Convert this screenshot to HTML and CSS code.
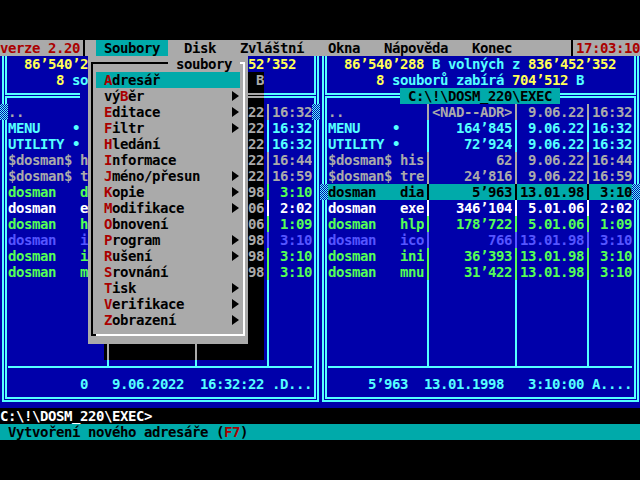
FILE: index.html
```html
<!DOCTYPE html>
<html lang="cs">
<head>
<meta charset="utf-8">
<title>DOS Manager 2.20</title>
<link rel="stylesheet" href="styles.css">
</head>
<body>
<div class="screen">
  <div class="row menubar"><span class="w10 red">verze 2.20</span><i class="w1 sv"></i><span class="w1"> </span><span class="w9 msel"> Soubory </span><span class="w50">  Disk   Zvláštní   Okna   Nápověda   Konec       </span><i class="w1 sv"></i><span class="w8 red">17:03:10</span></div>

  <div class="panels">
    <div class="panel">
      <div class="row"><i class="w1 dv"></i><span class="w10">  <span class="y">86’540’2</span></span><i class="w20"></i><span class="w8"><span class="y">52’352</span>  </span><i class="w1 dv"></i></div>
      <div class="row"><i class="w1 dv"></i><span class="w10">      <span class="y">8</span> so</span><i class="w20"></i><span class="w2 shd"> B</span><span class="w6">      </span><i class="w1 dv"></i></div>
      <div class="row"><i class="w1 dlt"></i><i class="w9 dh"></i><i class="w21"></i><i class="w2 dh shd"></i><i class="w6 dh"></i><i class="w1 drt"></i></div>
      <div class="row gr"><i class="w1 stip"></i><span class="w10">..</span><i class="w20"></i><span class="w2 shd">22</span><i class="w1 sv"></i><span class="w5">16:32</span><i class="w1 stip"></i></div>
      <div class="row cy"><i class="w1 dv"></i><span class="w10">MENU    •</span><i class="w20"></i><span class="w2 shd">22</span><i class="w1 sv"></i><span class="w5">16:32</span><i class="w1 dv"></i></div>
      <div class="row cy"><i class="w1 dv"></i><span class="w10">UTILITY •</span><i class="w20"></i><span class="w2 shd">22</span><i class="w1 sv"></i><span class="w5">16:32</span><i class="w1 dv"></i></div>
      <div class="row gr"><i class="w1 dv"></i><span class="w10">$dosman$ h</span><i class="w20"></i><span class="w2 shd">22</span><i class="w1 sv"></i><span class="w5">16:44</span><i class="w1 dv"></i></div>
      <div class="row gr"><i class="w1 dv"></i><span class="w10">$dosman$ t</span><i class="w20"></i><span class="w2 shd">22</span><i class="w1 sv"></i><span class="w5">16:59</span><i class="w1 dv"></i></div>
      <div class="row gn"><i class="w1 dv"></i><span class="w10">dosman   d</span><i class="w20"></i><span class="w2 shd">98</span><i class="w1 sv"></i><span class="w5"> 3:10</span><i class="w1 dv"></i></div>
      <div class="row wh"><i class="w1 dv"></i><span class="w10">dosman   e</span><i class="w20"></i><span class="w2 shd">06</span><i class="w1 sv"></i><span class="w5"> 2:02</span><i class="w1 dv"></i></div>
      <div class="row gn"><i class="w1 dv"></i><span class="w10">dosman   h</span><i class="w20"></i><span class="w2 shd">06</span><i class="w1 sv"></i><span class="w5"> 1:09</span><i class="w1 dv"></i></div>
      <div class="row lb"><i class="w1 dv"></i><span class="w10">dosman   i</span><i class="w20"></i><span class="w2 shd">98</span><i class="w1 sv"></i><span class="w5"> 3:10</span><i class="w1 dv"></i></div>
      <div class="row gn"><i class="w1 dv"></i><span class="w10">dosman   i</span><i class="w20"></i><span class="w2 shd">98</span><i class="w1 sv"></i><span class="w5"> 3:10</span><i class="w1 dv"></i></div>
      <div class="row gn"><i class="w1 dv"></i><span class="w10">dosman   m</span><i class="w20"></i><span class="w2 shd">98</span><i class="w1 sv"></i><span class="w5"> 3:10</span><i class="w1 dv"></i></div>
      <div class="row"><i class="w1 dv"></i><i class="w10"></i><i class="w20"></i><i class="w2 shd"></i><i class="w1 sv"></i><i class="w5"></i><i class="w1 dv"></i></div>
      <div class="row"><i class="w1 dv"></i><i class="w10"></i><i class="w20"></i><i class="w2 shd"></i><i class="w1 sv"></i><i class="w5"></i><i class="w1 dv"></i></div>
      <div class="row"><i class="w1 dv"></i><i class="w10"></i><i class="w20"></i><i class="w2 shd"></i><i class="w1 sv"></i><i class="w5"></i><i class="w1 dv"></i></div>
      <div class="row"><i class="w1 dv"></i><i class="w10"></i><i class="w20"></i><i class="w2 shd"></i><i class="w1 sv"></i><i class="w5"></i><i class="w1 dv"></i></div>
      <div class="row"><i class="w1 dv"></i><i class="w12"></i><i class="w1 sv shd"></i><i class="w10 shd"></i><i class="w1 sv shd"></i><i class="w8 shd"></i><i class="w1 sv"></i><i class="w5"></i><i class="w1 dv"></i></div>
      <div class="row"><i class="w1 dv"></i><i class="w12 sh"></i><i class="w1 sbt"></i><i class="w10 sh"></i><i class="w1 sbt"></i><i class="w8 sh"></i><i class="w1 sbt"></i><i class="w5 sh"></i><i class="w1 dv"></i></div>
      <div class="row"><i class="w1 dv"></i><span class="w38">         0   9.06.2022  16:32:22 .D...</span><i class="w1 dv"></i></div>
      <div class="row"><i class="w1 dbl"></i><i class="w38 dh"></i><i class="w1 dbr"></i></div>
    </div>

    <div class="panel">
      <div class="row"><i class="w1 dv"></i><span class="w38">  <span class="y">86’540’288</span> B volných z <span class="y">836’452’352</span>  </span><i class="w1 dv"></i></div>
      <div class="row"><i class="w1 dv"></i><span class="w38">      <span class="y">8</span> souborů zabírá <span class="y">704’512</span> B      </span><i class="w1 dv"></i></div>
      <div class="row"><i class="w1 dlt"></i><i class="w9 dh"></i><span class="w20 lblon"> C:\!\DOSM_220\EXEC </span><i class="w9 dh"></i><i class="w1 drt"></i></div>
      <div class="row gr"><i class="w1 dv"></i><span class="w12">..          </span><i class="w1 sv"></i><span class="w10">&lt;NAD--ADR&gt;</span><i class="w1 sv"></i><span class="w8"> 9.06.22</span><i class="w1 sv"></i><span class="w5">16:32</span><i class="w1 dv"></i></div>
      <div class="row cy"><i class="w1 dv"></i><span class="w12">MENU    •   </span><i class="w1 sv"></i><span class="w10">   164’845</span><i class="w1 sv"></i><span class="w8"> 9.06.22</span><i class="w1 sv"></i><span class="w5">16:32</span><i class="w1 dv"></i></div>
      <div class="row cy"><i class="w1 dv"></i><span class="w12">UTILITY •   </span><i class="w1 sv"></i><span class="w10">    72’924</span><i class="w1 sv"></i><span class="w8"> 9.06.22</span><i class="w1 sv"></i><span class="w5">16:32</span><i class="w1 dv"></i></div>
      <div class="row gr"><i class="w1 dv"></i><span class="w12">$dosman$ his</span><i class="w1 sv"></i><span class="w10">        62</span><i class="w1 sv"></i><span class="w8"> 9.06.22</span><i class="w1 sv"></i><span class="w5">16:44</span><i class="w1 dv"></i></div>
      <div class="row gr"><i class="w1 dv"></i><span class="w12">$dosman$ tre</span><i class="w1 sv"></i><span class="w10">    24’816</span><i class="w1 sv"></i><span class="w8"> 9.06.22</span><i class="w1 sv"></i><span class="w5">16:59</span><i class="w1 dv"></i></div>
      <div class="row hl"><i class="w1 stip"></i><span class="w12">dosman   dia</span><i class="w1 sv"></i><span class="w10">     5’963</span><i class="w1 sv"></i><span class="w8">13.01.98</span><i class="w1 sv"></i><span class="w5"> 3:10</span><i class="w1 stip"></i></div>
      <div class="row wh"><i class="w1 dv"></i><span class="w12">dosman   exe</span><i class="w1 sv"></i><span class="w10">   346’104</span><i class="w1 sv"></i><span class="w8"> 5.01.06</span><i class="w1 sv"></i><span class="w5"> 2:02</span><i class="w1 dv"></i></div>
      <div class="row gn"><i class="w1 dv"></i><span class="w12">dosman   hlp</span><i class="w1 sv"></i><span class="w10">   178’722</span><i class="w1 sv"></i><span class="w8"> 5.01.06</span><i class="w1 sv"></i><span class="w5"> 1:09</span><i class="w1 dv"></i></div>
      <div class="row lb"><i class="w1 dv"></i><span class="w12">dosman   ico</span><i class="w1 sv"></i><span class="w10">       766</span><i class="w1 sv"></i><span class="w8">13.01.98</span><i class="w1 sv"></i><span class="w5"> 3:10</span><i class="w1 dv"></i></div>
      <div class="row gn"><i class="w1 dv"></i><span class="w12">dosman   ini</span><i class="w1 sv"></i><span class="w10">    36’393</span><i class="w1 sv"></i><span class="w8">13.01.98</span><i class="w1 sv"></i><span class="w5"> 3:10</span><i class="w1 dv"></i></div>
      <div class="row gn"><i class="w1 dv"></i><span class="w12">dosman   mnu</span><i class="w1 sv"></i><span class="w10">    31’422</span><i class="w1 sv"></i><span class="w8">13.01.98</span><i class="w1 sv"></i><span class="w5"> 3:10</span><i class="w1 dv"></i></div>
      <div class="row"><i class="w1 dv"></i><i class="w12"></i><i class="w1 sv"></i><i class="w10"></i><i class="w1 sv"></i><i class="w8"></i><i class="w1 sv"></i><i class="w5"></i><i class="w1 dv"></i></div>
      <div class="row"><i class="w1 dv"></i><i class="w12"></i><i class="w1 sv"></i><i class="w10"></i><i class="w1 sv"></i><i class="w8"></i><i class="w1 sv"></i><i class="w5"></i><i class="w1 dv"></i></div>
      <div class="row"><i class="w1 dv"></i><i class="w12"></i><i class="w1 sv"></i><i class="w10"></i><i class="w1 sv"></i><i class="w8"></i><i class="w1 sv"></i><i class="w5"></i><i class="w1 dv"></i></div>
      <div class="row"><i class="w1 dv"></i><i class="w12"></i><i class="w1 sv"></i><i class="w10"></i><i class="w1 sv"></i><i class="w8"></i><i class="w1 sv"></i><i class="w5"></i><i class="w1 dv"></i></div>
      <div class="row"><i class="w1 dv"></i><i class="w12"></i><i class="w1 sv"></i><i class="w10"></i><i class="w1 sv"></i><i class="w8"></i><i class="w1 sv"></i><i class="w5"></i><i class="w1 dv"></i></div>
      <div class="row"><i class="w1 dv"></i><i class="w12 sh"></i><i class="w1 sbt"></i><i class="w10 sh"></i><i class="w1 sbt"></i><i class="w8 sh"></i><i class="w1 sbt"></i><i class="w5 sh"></i><i class="w1 dv"></i></div>
      <div class="row"><i class="w1 dv"></i><span class="w38">     5’963  13.01.1998   3:10:00 A....</span><i class="w1 dv"></i></div>
      <div class="row"><i class="w1 dbl"></i><i class="w38 dh"></i><i class="w1 dbr"></i></div>
    </div>
  </div>

  <div class="row prompt"><span class="w80">C:\!\DOSM_220\EXEC&gt;</span></div>
  <div class="row status"><span class="w80"> Vytvoření nového adresáře (<em>F7</em>)</span></div>

  <div class="menu">
    <div class="row"><i class="w1 ctl"></i><i class="w9 sh"></i><span class="w9"> soubory </span><i class="w1 ctr wht"></i></div>
    <div class="row sel"><i class="w1 sv"></i><span class="w17 it"> <em>A</em>dresář</span><i class="w1 it"></i><i class="w1 sv wht"></i></div>
    <div class="row"><i class="w1 sv"></i><span class="w17 it"> vý<em>B</em>ěr</span><i class="w1 it arr"></i><i class="w1 sv wht"></i></div>
    <div class="row"><i class="w1 sv"></i><span class="w17 it"> <em>E</em>ditace</span><i class="w1 it arr"></i><i class="w1 sv wht"></i></div>
    <div class="row"><i class="w1 sv"></i><span class="w17 it"> <em>F</em>iltr</span><i class="w1 it arr"></i><i class="w1 sv wht"></i></div>
    <div class="row"><i class="w1 sv"></i><span class="w17 it"> <em>H</em>ledání</span><i class="w1 it"></i><i class="w1 sv wht"></i></div>
    <div class="row"><i class="w1 sv"></i><span class="w17 it"> <em>I</em>nformace</span><i class="w1 it"></i><i class="w1 sv wht"></i></div>
    <div class="row"><i class="w1 sv"></i><span class="w17 it"> <em>J</em>méno/přesun</span><i class="w1 it arr"></i><i class="w1 sv wht"></i></div>
    <div class="row"><i class="w1 sv"></i><span class="w17 it"> <em>K</em>opie</span><i class="w1 it arr"></i><i class="w1 sv wht"></i></div>
    <div class="row"><i class="w1 sv"></i><span class="w17 it"> <em>M</em>odifikace</span><i class="w1 it arr"></i><i class="w1 sv wht"></i></div>
    <div class="row"><i class="w1 sv"></i><span class="w17 it"> <em>O</em>bnovení</span><i class="w1 it"></i><i class="w1 sv wht"></i></div>
    <div class="row"><i class="w1 sv"></i><span class="w17 it"> <em>P</em>rogram</span><i class="w1 it arr"></i><i class="w1 sv wht"></i></div>
    <div class="row"><i class="w1 sv"></i><span class="w17 it"> <em>R</em>ušení</span><i class="w1 it arr"></i><i class="w1 sv wht"></i></div>
    <div class="row"><i class="w1 sv"></i><span class="w17 it"> <em>S</em>rovnání</span><i class="w1 it"></i><i class="w1 sv wht"></i></div>
    <div class="row"><i class="w1 sv"></i><span class="w17 it"> <em>T</em>isk</span><i class="w1 it arr"></i><i class="w1 sv wht"></i></div>
    <div class="row"><i class="w1 sv"></i><span class="w17 it"> <em>V</em>erifikace</span><i class="w1 it arr"></i><i class="w1 sv wht"></i></div>
    <div class="row"><i class="w1 sv"></i><span class="w17 it"> <em>Z</em>obrazení</span><i class="w1 it arr"></i><i class="w1 sv wht"></i></div>
    <div class="row"><i class="w1 cbl"></i><i class="w18 sh wht"></i><i class="w1 cbr wht"></i></div>
  </div>
</div>
</body>
</html>
```

FILE: styles.css
```css
* { margin: 0; padding: 0; box-sizing: border-box; }

html, body { background: #000; }

body {
  width: 640px;
  height: 480px;
  overflow: hidden;
  font-family: "DejaVu Sans Mono", "Liberation Mono", monospace;
  font-weight: bold;
  font-size: 14px;
  letter-spacing: -0.43px;
  line-height: 16px;
}

.screen {
  position: relative;
  width: 640px;
  height: 480px;
  padding-top: 40px;
  background: #000;
  --l: linear-gradient(currentColor, currentColor);
}

.row { display: flex; height: 16px; }
.row > * {
  display: block;
  flex: none;
  height: 16px;
  white-space: pre;
  overflow: hidden;
  font-style: normal;
}

em { font-style: normal; color: #aa0000; }

/* cell widths (8px per text cell) */
.w1 { width: 8px; }
.w2 { width: 16px; }
.w5 { width: 40px; }
.w6 { width: 48px; }
.w8 { width: 64px; }
.w9 { width: 72px; }
.w10 { width: 80px; }
.w12 { width: 96px; }
.w17 { width: 136px; }
.w18 { width: 144px; }
.w20 { width: 160px; }
.w21 { width: 168px; }
.w30 { width: 240px; }
.w38 { width: 304px; }
.w50 { width: 400px; }
.w80 { width: 640px; }

/* top menu bar */
.menubar { background: #aaaaaa; color: #000; }
.red { color: #aa0000; }
.msel { background: #00aaaa; color: #000; }

/* panels */
.panels { display: flex; }
.panel { width: 320px; background: #0000aa; color: #55ffff; }

.y { color: #ffff55; }
.gr { color: #aaaaaa; }
.cy { color: #55ffff; }
.gn { color: #55ff55; }
.wh { color: #ffffff; }
.lb { color: #5555ff; }

.lblon { background: #00aaaa; color: #000; }

.hl > span, .hl > .sv { background-color: #00aaaa; color: #000; }

/* single line glyphs */
.sv { background: var(--l) 3px 0 / 2px 16px no-repeat; }
.sh { background: var(--l) 0 6px / 100% 2px no-repeat; }
.sbt { background: var(--l) 3px 0 / 2px 8px no-repeat, var(--l) 0 6px / 8px 2px no-repeat; }
.ctl { background: var(--l) 3px 6px / 2px 10px no-repeat, var(--l) 3px 6px / 5px 2px no-repeat; }
.ctr { background: var(--l) 0 6px / 5px 2px no-repeat, var(--l) 3px 6px / 2px 10px no-repeat; }
.cbl { background: var(--l) 3px 0 / 2px 8px no-repeat, var(--l) 3px 6px / 5px 2px no-repeat; }
.cbr { background: var(--l) 3px 0 / 2px 8px no-repeat, var(--l) 0 6px / 5px 2px no-repeat; }

/* double line frame glyphs */
.dv, .dh, .dlt, .drt, .dbl, .dbr { color: #55ffff; }
.dv { background: var(--l) 2px 0 / 2px 16px no-repeat, var(--l) 5px 0 / 2px 16px no-repeat; }
.dh { background: var(--l) 0 5px / 100% 2px no-repeat, var(--l) 0 8px / 100% 2px no-repeat; }
.dlt {
  background: var(--l) 2px 0 / 2px 16px no-repeat,
              var(--l) 5px 0 / 2px 7px no-repeat,
              var(--l) 5px 5px / 3px 2px no-repeat,
              var(--l) 5px 8px / 3px 2px no-repeat,
              var(--l) 5px 8px / 2px 8px no-repeat;
}
.drt {
  background: var(--l) 5px 0 / 2px 16px no-repeat,
              var(--l) 2px 0 / 2px 7px no-repeat,
              var(--l) 0 5px / 4px 2px no-repeat,
              var(--l) 0 8px / 4px 2px no-repeat,
              var(--l) 2px 8px / 2px 8px no-repeat;
}
.dbl {
  background: var(--l) 2px 0 / 2px 10px no-repeat,
              var(--l) 2px 8px / 6px 2px no-repeat,
              var(--l) 5px 0 / 2px 7px no-repeat,
              var(--l) 5px 5px / 3px 2px no-repeat;
}
.dbr {
  background: var(--l) 5px 0 / 2px 10px no-repeat,
              var(--l) 0 8px / 7px 2px no-repeat,
              var(--l) 2px 0 / 2px 7px no-repeat,
              var(--l) 0 5px / 4px 2px no-repeat;
}

/* cursor marker on the frame */
.stip {
  background: repeating-conic-gradient(#55ffff 0 25%, #0000aa 0 50%) 0 0 / 2px 2px;
}

/* shadow of the pull-down menu */
.shd { background-color: #000; color: #aaaaaa; }

/* bottom lines */
.prompt { color: #ffffff; }
.status { background: #00aaaa; color: #000; }

/* pull-down menu */
.menu {
  position: absolute;
  left: 88px;
  top: 56px;
  width: 160px;
  background: #aaaaaa;
  color: #000;
}
.wht { color: #ffffff; }
.menu .sel > .it { background-color: #00aaaa; }
.arr::before {
  content: "";
  display: block;
  width: 0;
  height: 0;
  margin-top: 3px;
  border-left: 7px solid #000;
  border-top: 5px solid transparent;
  border-bottom: 5px solid transparent;
}
```
